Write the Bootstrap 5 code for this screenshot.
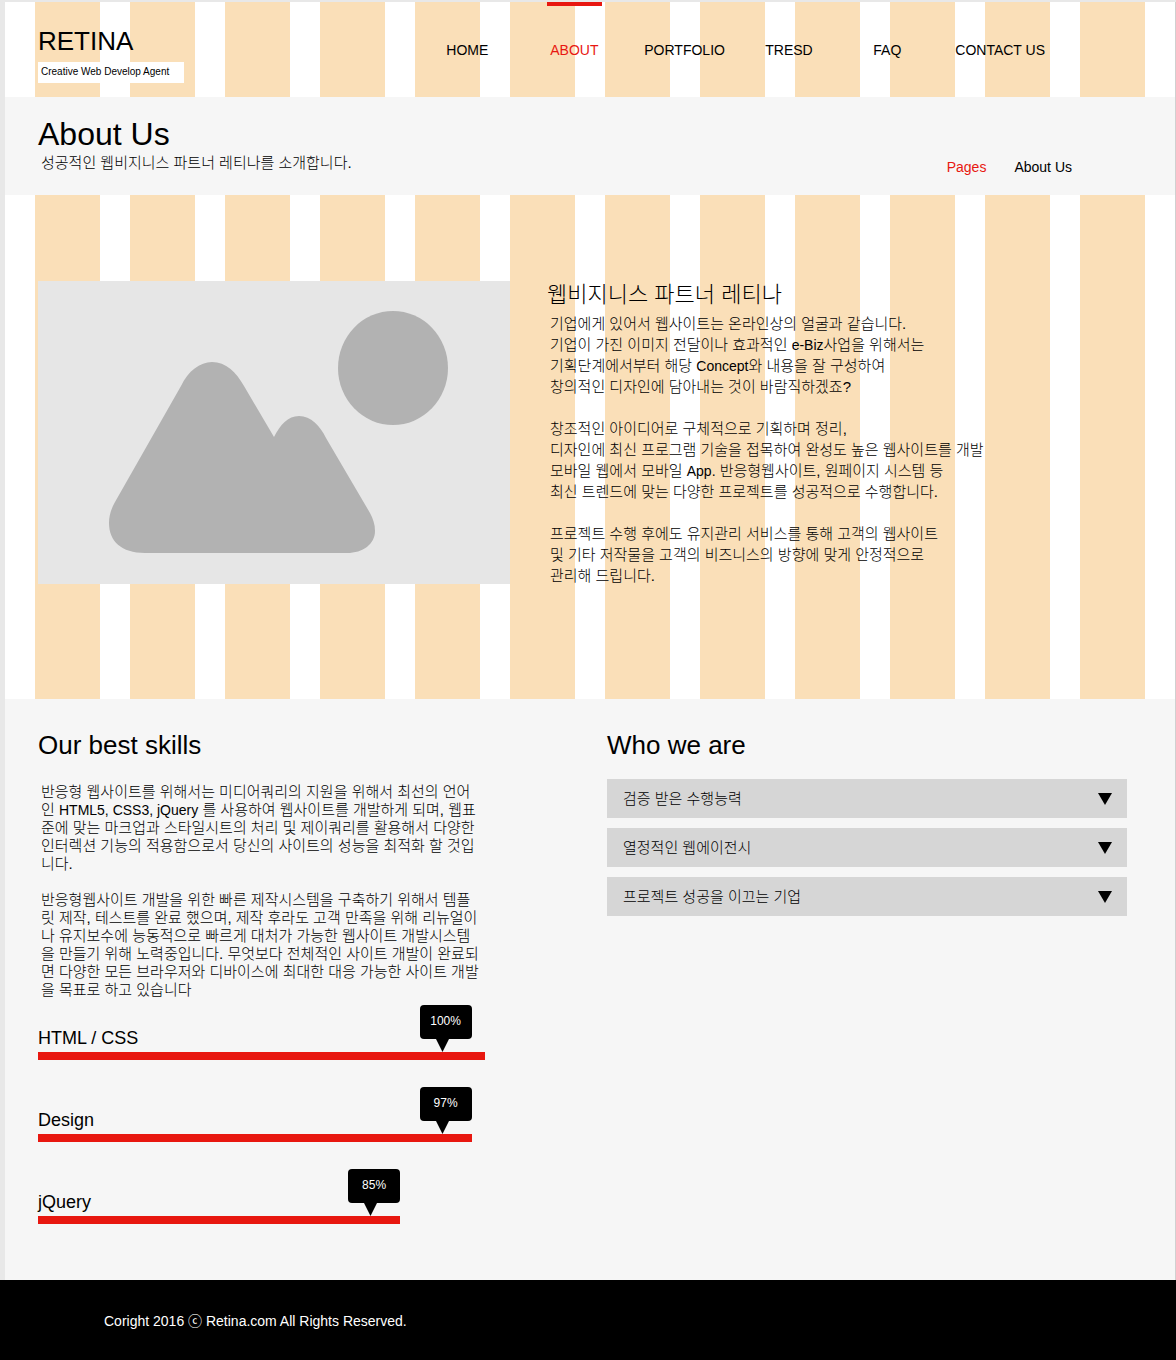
<!DOCTYPE html>
<html lang="ko">
<head>
<meta charset="utf-8">
<meta name="viewport" content="width=device-width, initial-scale=1">
<title>RETINA - About Us</title>
<link href="https://cdn.jsdelivr.net/npm/bootstrap@5.3.0/dist/css/bootstrap.min.css" rel="stylesheet">
<style>
  body { background: #e8e8e8; color: #000; font: 300 15px/18px "Liberation Sans", "Noto Sans CJK KR", sans-serif; }
  a { color: #000; text-decoration: none; }
  h1, h2, h3, p, ul, figure { margin: 0; font-weight: inherit; }

  .sheet {
    margin: 2px 0 0 5px;
    border-right: 1px solid #d0d0d0;
    background: repeating-linear-gradient(90deg, #fff 0 30px, #fadfb8 30px 95px);
  }
  .band { background: #f6f6f6; }
  .inset-start { padding-left: 33px; }
  .indent { padding-left: 3px; }
  .en { font-size: 14px; line-height: 1; }

  .site-head { height: 95px; padding-top: 23px; }
  .logo { font-size: 26px; line-height: 32px; }
  .tagline { margin-top: 5px; width: 146px; padding-left: 3px; background: #fff; font-size: 10px; line-height: 20px; padding-bottom: 1px; }
  .menu { display: grid; grid-template-columns: 104px 94px 121px 108px 82px auto; margin: -23px 127px 0 auto; font-size: 14px; line-height: 20px; }
  .menu a { display: inline-block; padding: 34px 3px 0; border-top: 4px solid transparent; white-space: nowrap; }
  .menu a.active { border-top-color: #e81710; }
  .red { color: #e81710 !important; }

  .title-band { padding: 18px 103px 18px 33px; }
  .title-block { padding-bottom: 4px; }
  .title-band h1 { font-size: 32px; line-height: 38px; }
  .title-band p { line-height: 20px; }
  .crumbs { gap: 28px; font-size: 14px; line-height: 20px; }

  .intro { padding-top: 86px; padding-bottom: 113px; gap: 37px; }
  .photo { flex: 0 1 472px; }
  .photo svg { display: block; width: 100%; }
  .intro h2 { font-size: 22px; line-height: 28px; margin-bottom: 4px; }
  .intro p { line-height: 21px; }

  .lower { padding: 30px 48px 56px 33px; }
  .lower h2 { font-size: 26px; line-height: 32px; }
  .skills { flex: 0 1 447px; }
  .skills p { margin-top: 22px; margin-bottom: 6px; white-space: nowrap; }
  .skill-list { display: grid; gap: 27px; }
  .skill-name { font-size: 18px; line-height: 28px; }
  .tip { width: 52px; }
  .tip-box { height: 34px; border-radius: 4px; background: #000; color: #fff; font-size: 12px; line-height: 32px; text-align: center; }
  .tip svg { display: block; margin-left: 16px; }
  .meter-fill { height: 8px; background: #e81710; }

  .about { flex: 0 1 520px; }
  .about-list { display: grid; gap: 10px; margin-top: 18px; }
  .fold { border: 0; background: #d6d6d6; color: #000; padding: 0 15px 0 16px; height: 39px; font-weight: 300; text-align: left; }

  .foot { background: #000; color: #fff; padding: 32px 104px 30px; font-size: 14px; font-weight: 400; }
</style>
</head>
<body>
<div class="sheet">
  <header class="site-head inset-start d-flex align-items-start">
    <div>
      <a href="#" class="logo d-block">RETINA</a>
      <div class="tagline">Creative Web Develop Agent</div>
    </div>
    <nav class="menu" aria-label="Main">
      <div><a href="#">HOME</a></div>
      <div><a href="#" class="active red" aria-current="page">ABOUT</a></div>
      <div><a href="#">PORTFOLIO</a></div>
      <div><a href="#">TRESD</a></div>
      <div><a href="#">FAQ</a></div>
      <div><a href="#">CONTACT US</a></div>
    </nav>
  </header>

  <section class="band title-band d-flex justify-content-between align-items-end">
    <div class="title-block">
      <h1>About Us</h1>
      <p class="indent">성공적인 웹비지니스 파트너 레티나를 소개합니다.</p>
    </div>
    <nav class="crumbs d-flex" aria-label="Breadcrumb">
      <a href="#" class="red">Pages</a>
      <a href="#">About Us</a>
    </nav>
  </section>

  <main>
    <section class="intro inset-start d-flex align-items-start">
      <figure class="photo">
        <svg viewBox="0 0 472 303" role="img" aria-label="Placeholder">
          <rect width="472" height="303" fill="#e6e6e6"/>
          <g fill="#b2b2b2">
            <ellipse cx="355" cy="87" rx="55" ry="57"/>
            <path d="M107 272C83 272 71 260 71 242C71 235 73 228 77 221L143 105C150 90 162 81 174 81C188 81 198 91 206 105L236 156C242 144 250 135 261 135C273 135 282 145 288 157L332 232C335 238 337 243 337 250C337 263 325 272 309 272Z"/>
          </g>
        </svg>
      </figure>
      <div>
        <h2>웹비지니스 파트너 레티나</h2>
        <p class="indent">기업에게 있어서 웹사이트는 온라인상의 얼굴과 같습니다.<br>
          기업이 가진 이미지 전달이나 효과적인 <span class="en">e-Biz</span>사업을 위해서는<br>
          기획단계에서부터 해당 <span class="en">Concept</span>와 내용을 잘 구성하여<br>
          창의적인 디자인에 담아내는 것이 바람직하겠죠?<br><br>
          창조적인 아이디어로 구체적으로 기획하며 정리,<br>
          디자인에 최신 프로그램 기술을 접목하여 완성도 높은 웹사이트를 개발<br>
          모바일 웹에서 모바일 <span class="en">App.</span> 반응형웹사이트, 원페이지 시스템 등<br>
          최신 트렌드에 맞는 다양한 프로젝트를 성공적으로 수행합니다.<br><br>
          프로젝트 수행 후에도 유지관리 서비스를 통해 고객의 웹사이트<br>
          및 기타 저작물을 고객의 비즈니스의 방향에 맞게 안정적으로<br>
          관리해 드립니다.</p>
      </div>
    </section>

    <div class="band lower d-flex justify-content-between align-items-start">
      <section class="skills">
        <h2>Our best skills</h2>
        <p class="indent">반응형 웹사이트를 위해서는 미디어쿼리의 지원을 위해서 최선의 언어<br>
          인 <span class="en">HTML5, CSS3, jQuery</span> 를 사용하여 웹사이트를 개발하게 되며, 웹표<br>
          준에 맞는 마크업과 스타일시트의 처리 및 제이쿼리를 활용해서 다양한<br>
          인터렉션 기능의 적용함으로서 당신의 사이트의 성능을 최적화 할 것입<br>
          니다.<br><br>
          반응형웹사이트 개발을 위한 빠른 제작시스템을 구축하기 위해서 템플<br>
          릿 제작, 테스트를 완료 했으며, 제작 후라도 고객 만족을 위해 리뉴얼이<br>
          나 유지보수에 능동적으로 빠르게 대처가 가능한 웹사이트 개발시스템<br>
          을 만들기 위해 노력중입니다. 무엇보다 전체적인 사이트 개발이 완료되<br>
          면 다양한 모든 브라우저와 디바이스에 최대한 대응 가능한 사이트 개발<br>
          을 목표로 하고 있습니다</p>
        <div class="skill-list">
          <div>
            <div class="d-flex justify-content-between align-items-end" style="width:97%">
              <h3 class="skill-name">HTML / CSS</h3>
              <div class="tip"><div class="tip-box">100%</div><svg width="13" height="13"><path d="M0 0H13L6.500 13Z"/></svg></div>
            </div>
            <div class="meter-fill" style="width:100%"></div>
          </div>
          <div>
            <div class="d-flex justify-content-between align-items-end" style="width:97%">
              <h3 class="skill-name">Design</h3>
              <div class="tip"><div class="tip-box">97%</div><svg width="13" height="13"><path d="M0 0H13L6.500 13Z"/></svg></div>
            </div>
            <div class="meter-fill" style="width:97%"></div>
          </div>
          <div>
            <div class="d-flex justify-content-between align-items-end" style="width:81%">
              <h3 class="skill-name">jQuery</h3>
              <div class="tip"><div class="tip-box">85%</div><svg width="13" height="13"><path d="M0 0H13L6.500 13Z"/></svg></div>
            </div>
            <div class="meter-fill" style="width:81%"></div>
          </div>
        </div>
      </section>

      <section class="about">
        <h2>Who we are</h2>
        <div class="about-list">
          <div>
            <button type="button" class="fold d-flex w-100 justify-content-between align-items-center" data-bs-toggle="collapse" data-bs-target="#fold1" aria-expanded="false" aria-controls="fold1">검증 받은 수행능력
              <svg width="14" height="12" aria-hidden="true"><path d="M0 0H14L7 12Z"/></svg></button>
            <div id="fold1" class="collapse"></div>
          </div>
          <div>
            <button type="button" class="fold d-flex w-100 justify-content-between align-items-center" data-bs-toggle="collapse" data-bs-target="#fold2" aria-expanded="false" aria-controls="fold2">열정적인 웹에이전시
              <svg width="14" height="12" aria-hidden="true"><path d="M0 0H14L7 12Z"/></svg></button>
            <div id="fold2" class="collapse"></div>
          </div>
          <div>
            <button type="button" class="fold d-flex w-100 justify-content-between align-items-center" data-bs-toggle="collapse" data-bs-target="#fold3" aria-expanded="false" aria-controls="fold3">프로젝트 성공을 이끄는 기업
              <svg width="14" height="12" aria-hidden="true"><path d="M0 0H14L7 12Z"/></svg></button>
            <div id="fold3" class="collapse"></div>
          </div>
        </div>
      </section>
    </div>
  </main>
</div>
<footer class="foot">Coright 2016 ⓒ Retina.com All Rights Reserved.</footer>
<script src="https://cdn.jsdelivr.net/npm/bootstrap@5.3.0/dist/js/bootstrap.bundle.min.js"></script>
</body>
</html>
